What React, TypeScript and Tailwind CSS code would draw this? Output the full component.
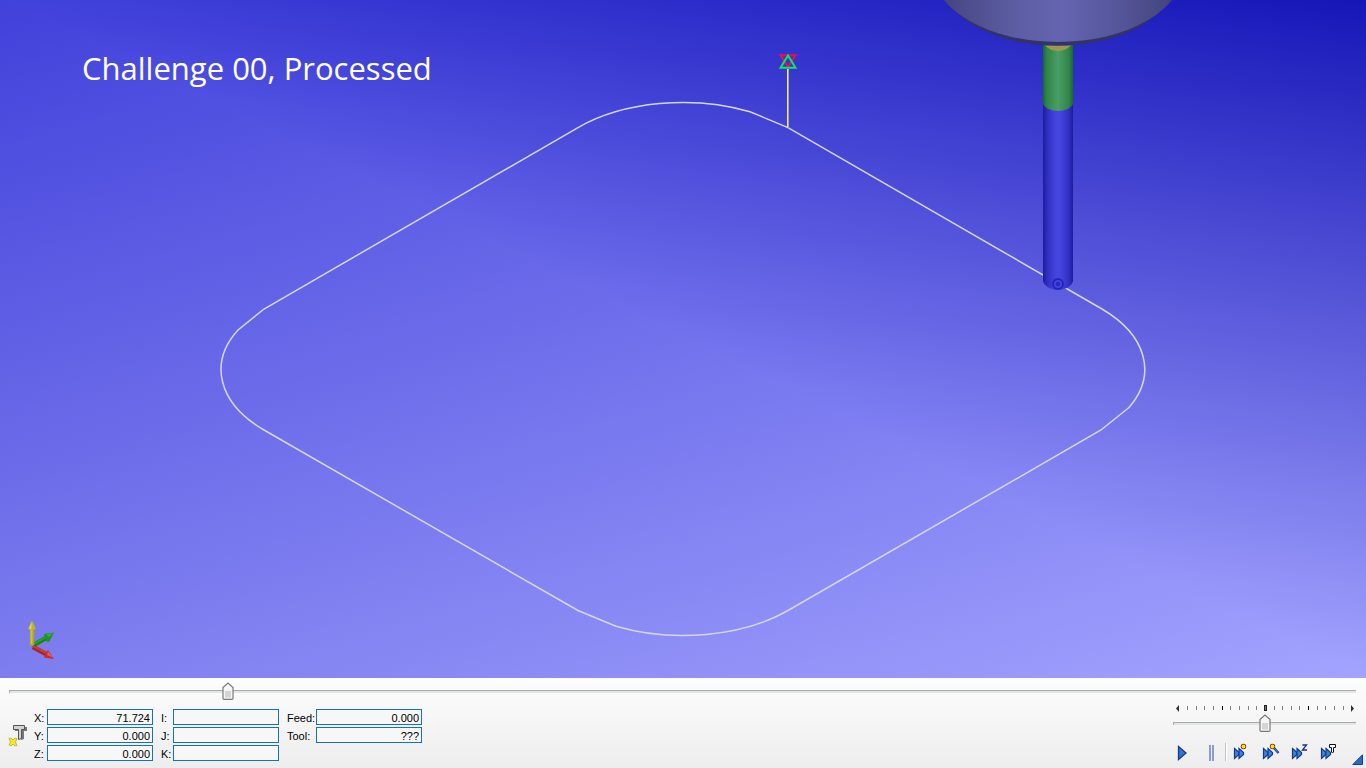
import { useState } from "react";
import type { ReactNode } from "react";

const PATH_COLOR = "#d6d6e6";

function Backdrop() {
  return (
    <svg className="absolute inset-0 size-full" viewBox="0 0 100 100" preserveAspectRatio="none" aria-hidden="true">
      <defs>
        <linearGradient id="upper" x1="1" y1="0" x2="0.7173" y2="0.9124">
          <stop offset="0" stopColor="rgb(22,22,0)" />
          <stop offset="1" stopColor="rgb(163,163,0)" />
        </linearGradient>
        <linearGradient id="upperBlue" x1="1" y1="0" x2="0.597" y2="0.795">
          <stop offset="0" stopColor="rgb(0,0,184)" />
          <stop offset="1" stopColor="rgb(0,0,255)" />
        </linearGradient>
        <linearGradient id="lower" x1="0" y1="0" x2="0.712" y2="1.174">
          <stop offset="0" stopColor="rgb(65,65,0)" />
          <stop offset="1" stopColor="rgb(163,163,0)" />
        </linearGradient>
        <linearGradient id="lowerBlue" x1="0" y1="0" x2="0.84" y2="1.12">
          <stop offset="0" stopColor="rgb(0,0,219)" />
          <stop offset="1" stopColor="rgb(0,0,255)" />
        </linearGradient>
      </defs>
      <g className="isolate">
        <rect width="100" height="100" fill="url(#lower)" />
        <rect width="100" height="100" fill="url(#lowerBlue)" className="mix-blend-screen" />
      </g>
      <g className="isolate [clip-path:polygon(0_0,100%_0,100%_100%)]">
        <rect width="100" height="100" fill="url(#upper)" />
        <rect width="100" height="100" fill="url(#upperBlue)" className="mix-blend-screen" />
      </g>
    </svg>
  );
}

function Scene() {
  return (
    <svg className="absolute inset-0 size-full" viewBox="0 0 1366 678" role="img" aria-label="Toolpath simulation">
      <defs>
        <linearGradient id="spindle">
          <stop offset="0" stopColor="#3e3e78" />
          <stop offset="0.12" stopColor="#4c4c8a" />
          <stop offset="0.35" stopColor="#5e5ea6" />
          <stop offset="0.52" stopColor="#6464b0" />
          <stop offset="0.7" stopColor="#5858a0" />
          <stop offset="0.88" stopColor="#4a4a86" />
          <stop offset="1" stopColor="#3e3e74" />
        </linearGradient>
        <linearGradient id="shank">
          <stop offset="0" stopColor="#1b6a2c" />
          <stop offset="0.12" stopColor="#2f8546" />
          <stop offset="0.5" stopColor="#489e66" />
          <stop offset="0.85" stopColor="#308648" />
          <stop offset="1" stopColor="#1b6a2c" />
        </linearGradient>
        <linearGradient id="cutter">
          <stop offset="0" stopColor="#1c1c9a" />
          <stop offset="0.14" stopColor="#2e2ebe" />
          <stop offset="0.35" stopColor="#4040d8" />
          <stop offset="0.5" stopColor="#4646e4" />
          <stop offset="0.65" stopColor="#4040d8" />
          <stop offset="0.88" stopColor="#2e2ebc" />
          <stop offset="1" stopColor="#1c1c9a" />
        </linearGradient>
      </defs>
      <path
        d="M578 127.6 A148.5 85.7 0 0 1 750 111.7 L788 127.6 L1102 309 A148.5 85.7 0 0 1 1129 407.5 L1101 430 L788 610.5 A148.5 85.7 0 0 1 616 626.3 L578 610.5 L264 430 A148.5 85.7 0 0 1 238 330 L264 309 Z"
        fill="none"
        stroke={PATH_COLOR}
        strokeWidth="1.5"
      />
      <path d="M788.5 128V69" stroke="#a9a79c" />
      <path d="M787.5 128V69" stroke="#f2ea7a" />
      <path d="M780.5 55.2H795.5L788 67Z" fill="none" stroke="#ea0f4c" strokeWidth="2" />
      <path d="M788 55.5L780.5 67.7H795.5Z" fill="none" stroke="#08e860" strokeWidth="2" />
      <path d="M1043 100V281C1044 286 1051 290 1058 290C1065 290 1072 286 1073 281V100Z" fill="url(#cutter)" />
      <circle cx="1058" cy="284" r="5" fill="none" stroke="#2323b8" strokeWidth="1.8" />
      <circle cx="1058" cy="284" r="2.2" fill="#2828c4" />
      <path d="M1043 40V104C1045 108 1051 111 1058 111C1065 111 1071 108 1073 104V40Z" fill="url(#shank)" />
      <path d="M1044 44C1047 48 1052 51 1058 51C1064 51 1069 48 1072 44Z" fill="#9c9854" />
      <ellipse cx="1058" cy="-23" rx="118" ry="68.8" fill="#333368" />
      <ellipse cx="1058" cy="-31" rx="126" ry="73" fill="url(#spindle)" />
      <g>
        <path d="M32 646L46 638" stroke="#178519" strokeWidth="4.4" />
        <path d="M32 645L46 637" stroke="#27a32a" strokeWidth="2" />
        <path d="M44 634L54 632.5L49 642L46 641Z" fill="#1f9424" />
        <path d="M46 634.5L53 633L49 637Z" fill="#34b238" />
        <path d="M32 646V628" stroke="#aaa62c" strokeWidth="4.4" />
        <path d="M31.5 644V628" stroke="#c6c13f" strokeWidth="2" />
        <path d="M32 620.5L36 629Q32 631 28 629Z" fill="#bcb622" />
        <path d="M31.5 622V629L29 628.5Z" fill="#e0da5a" />
        <path d="M33 647L46 654" stroke="#a52224" strokeWidth="4.6" />
        <path d="M33 646L46 653" stroke="#cc3936" strokeWidth="2" />
        <path d="M48 650L54 659L44 657.5Q45 653 48 650Z" fill="#c42c2e" />
        <path d="M48 651.5L53 657.5L47 655Z" fill="#e25f58" />
      </g>
    </svg>
  );
}

function Slider({ label, initial }: { label: string; initial: number }) {
  const [value, setValue] = useState(initial);
  return (
    <div className="relative h-[18px] w-full">
      <div className="flex h-full flex-col pt-2">
        <div className="h-[3px] border-t border-l border-t-[#a9abab] border-l-[#a9abab] bg-[#e1e6e6]" />
      </div>
      <svg
        className="pointer-events-none absolute top-0 h-[18px] w-[12px] -translate-x-1/2"
        style={{ left: `${value / 100}%` }}
        viewBox="0 0 12 18"
        aria-hidden="true"
      >
        <path d="M1 5.5L6 1L11 5.5V16.5Q11 17.3 10 17.3H2Q1 17.3 1 16.5Z" fill="#f6f6f6" stroke="#7a7a7a" strokeWidth="1.2" />
        <path d="M3 9H9V15.5H3Z" fill="#d4d4d4" />
      </svg>
      <input
        type="range"
        min={0}
        max={10000}
        value={value}
        onChange={(e) => setValue(Number(e.target.value))}
        aria-label={label}
        className="absolute inset-0 size-full cursor-pointer opacity-0"
      />
    </div>
  );
}

function Field({ id, label, value }: { id: string; label: string; value: string }) {
  return (
    <>
      <label htmlFor={id} className="text-[11px] leading-[18px]">
        {label}
      </label>
      <input
        id={id}
        defaultValue={value}
        readOnly
        className="h-4 w-[106px] border border-[#1670c0] bg-[#f7f7f7] pt-px pr-0.5 text-right text-[11px] leading-4 outline-none"
      />
    </>
  );
}

function IconButton({ label, className = "", children }: { label: string; className?: string; children: ReactNode }) {
  return (
    <button type="button" aria-label={label} title={label} className={`size-5 shrink-0 ${className}`}>
      <svg viewBox="0 0 20 20" className="size-5" aria-hidden="true">
        {children}
      </svg>
    </button>
  );
}

function FastForward() {
  return (
    <>
      <path d="M1.5 6.5L6 10.5V12.5L1.5 16.5Z" fill="#3f82da" stroke="#123a8c" strokeWidth="1.2" />
      <path d="M6 6.5L10.5 10.5V12.5L6 16.5Z" fill="#3f82da" stroke="#123a8c" strokeWidth="1.2" />
    </>
  );
}

function Dot() {
  return (
    <>
      <circle cx="10.5" cy="4.5" r="2.7" fill="#7c2210" />
      <circle cx="10.5" cy="4.5" r="1.9" fill="#ffe010" />
    </>
  );
}

function TickScale() {
  const ticks = Array.from({ length: 19 }, (_, i) => i);
  return (
    <svg viewBox="0 0 183 7" className="h-[7px] w-full" aria-hidden="true">
      <path d="M6 0V7L3 3.5Z" fill="#303030" />
      {ticks.map((i) => {
        const x = Math.round(14 + i * 8.65);
        if (i === 9) {
          return <rect key={i} x={91.5} y={0.5} width="2" height="5" fill="#777777" stroke="#222222" />;
        }
        const major = i === 4 || i === 14;
        return <rect key={i} x={x} y={1} width="1" height="4" fill={major ? "#000000" : "#808080"} />;
      })}
      <path d="M178 0V7L181 3.5Z" fill="#303030" />
    </svg>
  );
}

function ToolIcon() {
  return (
    <svg viewBox="0 0 20 24" className="h-6 w-5" aria-hidden="true">
      <path d="M7 4H19V8H16V16L13 17V8H7Z" fill="#777777" />
      <path d="M5.5 2.5H16.5V6.5H13.5V15.5L10.5 16.5V6.5H5.5Z" fill="#d4d4d4" stroke="#555555" />
      <path d="M1 15.5L3 15L5 17L7 15L9 15.5L7.5 19L9 22.5L7 23L5 21L3 23L1 22L2.5 19Z" fill="#f2e928" stroke="#b3a51c" strokeWidth="0.7" />
    </svg>
  );
}

export default function App() {
  return (
    <main className="flex h-screen flex-col overflow-hidden font-['Liberation_Sans',sans-serif] text-black">
      <section className="relative min-h-0 flex-1 overflow-hidden">
        <Backdrop />
        <Scene />
        <h1 className="relative pt-[46px] pl-[82px] font-['Open_Sans',sans-serif] text-[31px] leading-[44px] text-white">
          Challenge 00, Processed
        </h1>
      </section>
      <section aria-label="Simulation controls" className="relative h-[90px] shrink-0 bg-linear-to-b from-[#fdfdfd] to-[#ededed] pt-1">
        <div className="pr-[10px] pl-[9px]">
          <Slider label="Position" initial={1626} />
        </div>
        <div className="flex justify-between pr-[10px] pl-2">
          <div className="flex pt-[9px]">
            <div className="w-[26px] pt-[14px]">
              <ToolIcon />
            </div>
            <div className="flex gap-2">
              <div className="grid auto-rows-[16px] grid-cols-[13px_106px] gap-y-0.5">
                <Field id="x" label="X:" value="71.724" />
                <Field id="y" label="Y:" value="0.000" />
                <Field id="z" label="Z:" value="0.000" />
              </div>
              <div className="grid auto-rows-[16px] grid-cols-[12px_106px] gap-y-0.5">
                <Field id="i" label="I:" value="" />
                <Field id="j" label="J:" value="" />
                <Field id="k" label="K:" value="" />
              </div>
              <div className="grid auto-rows-[16px] grid-cols-[29px_106px] gap-y-0.5">
                <Field id="feed" label="Feed:" value="0.000" />
                <Field id="tool" label="Tool:" value="???" />
              </div>
            </div>
          </div>
          <div className="flex w-[183px] flex-col pt-[5px]">
            <TickScale />
            <div className="mt-0.5">
              <Slider label="Speed" initial={5030} />
            </div>
            <div className="mt-2.5 flex items-center">
              <IconButton label="Play" className="mr-2">
                <path d="M5.5 4.5L13 11L5.5 17.5Z" fill="#2f74d0" stroke="#153a86" strokeWidth="1.3" />
              </IconButton>
              <IconButton label="Pause" className="mr-1">
                <path d="M8 3H10V19H8Z M11 3H13V19H11Z" fill="#8e9bd2" />
              </IconButton>
              <div className="mr-1.5 h-[18px] w-0.5 border-r border-white bg-[#c4c4c4]" />
              <div className="flex gap-[9px]">
                <IconButton label="Run to next point">
                  <FastForward />
                  <Dot />
                </IconButton>
                <IconButton label="Run to next operation">
                  <FastForward />
                  <path d="M12 6L16.5 11" stroke="#14387e" strokeWidth="2.4" />
                  <path d="M12 6L16 10.5" stroke="#39a4e8" />
                  <Dot />
                </IconButton>
                <IconButton label="Run to next Z level">
                  <FastForward />
                  <path d="M11.5 3H15.5L11.5 8H16" fill="none" stroke="#1c2f7e" strokeWidth="1.3" />
                </IconButton>
                <IconButton label="Run to next tool change">
                  <FastForward />
                  <path d="M9.5 2.5H15.5V5.5H13.5V10L12.5 11L11.5 10V5.5H9.5Z" fill="#ffffff" stroke="#111111" />
                </IconButton>
              </div>
            </div>
          </div>
        </div>
        <svg viewBox="0 0 11 11" className="absolute right-[3px] bottom-[3px] size-[11px]" aria-hidden="true">
          <path d="M10.5 0.8V10.5H0.8Z" fill="#2c68c8" stroke="#163c92" />
        </svg>
      </section>
    </main>
  );
}
